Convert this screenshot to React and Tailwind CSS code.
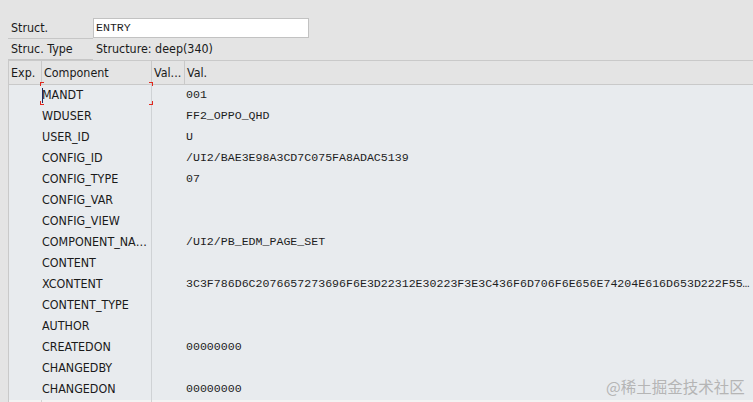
import React from "react";

const rows = [
  ["MANDT", "001"],
  ["WDUSER", "FF2_OPPO_QHD"],
  ["USER_ID", "U"],
  ["CONFIG_ID", "/UI2/BAE3E98A3CD7C075FA8ADAC5139"],
  ["CONFIG_TYPE", "07"],
  ["CONFIG_VAR", ""],
  ["CONFIG_VIEW", ""],
  ["COMPONENT_NA…", "/UI2/PB_EDM_PAGE_SET"],
  ["CONTENT", ""],
  ["XCONTENT", "3C3F786D6C2076657273696F6E3D22312E30223F3E3C436F6D706F6E656E74204E616D653D222F55…"],
  ["CONTENT_TYPE", ""],
  ["AUTHOR", ""],
  ["CREATEDON", "00000000"],
  ["CHANGEDBY", ""],
  ["CHANGEDON", "00000000"],
];

const sans = "font-['DejaVu_Sans_Condensed','DejaVu_Sans',sans-serif] [font-stretch:condensed] text-[12.4px] text-[#1a1a1a]";
const mono = "font-['Liberation_Mono','Courier_New',monospace] text-[11.6px] text-[#1e1e1e]";

export default function App() {
  return (
    <div className="relative w-[753px] h-[402px] overflow-hidden bg-[#e4e4e4]">
      {/* top form */}
      <div className="pt-[18px] pl-[8px]">
        <div className="flex h-[21px]">
          <div className={`w-[85px] h-[21px] border-b border-[#c6c6c6] pl-[3px] leading-[20px] ${sans}`}>Struct.</div>
          <div className={`w-[216px] h-[20px] bg-white border border-[#c2c2c2] pl-[2px] leading-[18px] ${mono}`}>ENTRY</div>
        </div>
        <div className="flex h-[21px]">
          <div className={`w-[85px] h-[21px] border-b border-[#c6c6c6] pl-[3px] leading-[20px] ${sans}`}>Struc. Type</div>
          <div className={`pl-[3px] leading-[20px] ${sans}`}>Structure: deep(340)</div>
        </div>
      </div>

      {/* table */}
      <div className="ml-[8px] border-l border-t border-[#c9c9c9]">
        {/* header */}
        <div className={`flex h-[24px] border-b border-[#c9c9c9] leading-[23px] ${sans}`}>
          <div className="w-[33px] border-r border-[#c9c9c9] pl-[2px]">Exp.</div>
          <div className="w-[110px] border-r border-[#c9c9c9] pl-[2px]">Component</div>
          <div className="w-[33px] border-r border-[#c9c9c9] pl-[2px]">Val...</div>
          <div className="flex-1 pl-[2px]">Val.</div>
        </div>
        {/* body */}
        <div className="bg-[#e8ebee]">
          {rows.map(([c, v], i) => (
            <div key={c} className="flex h-[21px] leading-[19px]">
              <div className="w-[33px]" />
              <div className={`relative w-[110px] border-r border-[#cfd2d5] ${sans} whitespace-nowrap overflow-hidden`}>
                {c}
                {i === 0 && (
                  <span className="absolute left-[0px] top-[3px] w-[1px] h-[15px] bg-[#1b2a5e]" />
                )}
              </div>
              <div className="w-[33px]" />
              <div className={`flex-1 pl-[1px] whitespace-nowrap overflow-hidden ${mono}`}>{v}</div>
            </div>
          ))}
          <div className="flex h-[10px] bg-[#f3f3f3]">
            <div className="w-[33px] border-r border-[#d2d2d2]" />
            <div className="w-[110px] border-r border-[#d2d2d2]" />
            <div className="flex-1" />
          </div>
        </div>
      </div>

      {/* focus corners around MANDT cell */}
      <div className="absolute left-[40px] top-[82px] w-[4px] h-[4px] border-l border-t border-[#e0281e]" />
      <div className="absolute left-[149px] top-[82px] w-[4px] h-[4px] border-r border-t border-[#e0281e]" />
      <div className="absolute left-[40px] top-[101px] w-[4px] h-[4px] border-l border-b border-[#e0281e]" />
      <div className="absolute left-[149px] top-[101px] w-[4px] h-[4px] border-r border-b border-[#e0281e]" />

      {/* watermark */}
      <div className="absolute left-[606px] top-[376px] text-[15.5px] leading-[20px] text-[#b5b5b5] font-['Noto_Sans_CJK_SC',sans-serif]">
        @稀土掘金技术社区
      </div>
    </div>
  );
}
